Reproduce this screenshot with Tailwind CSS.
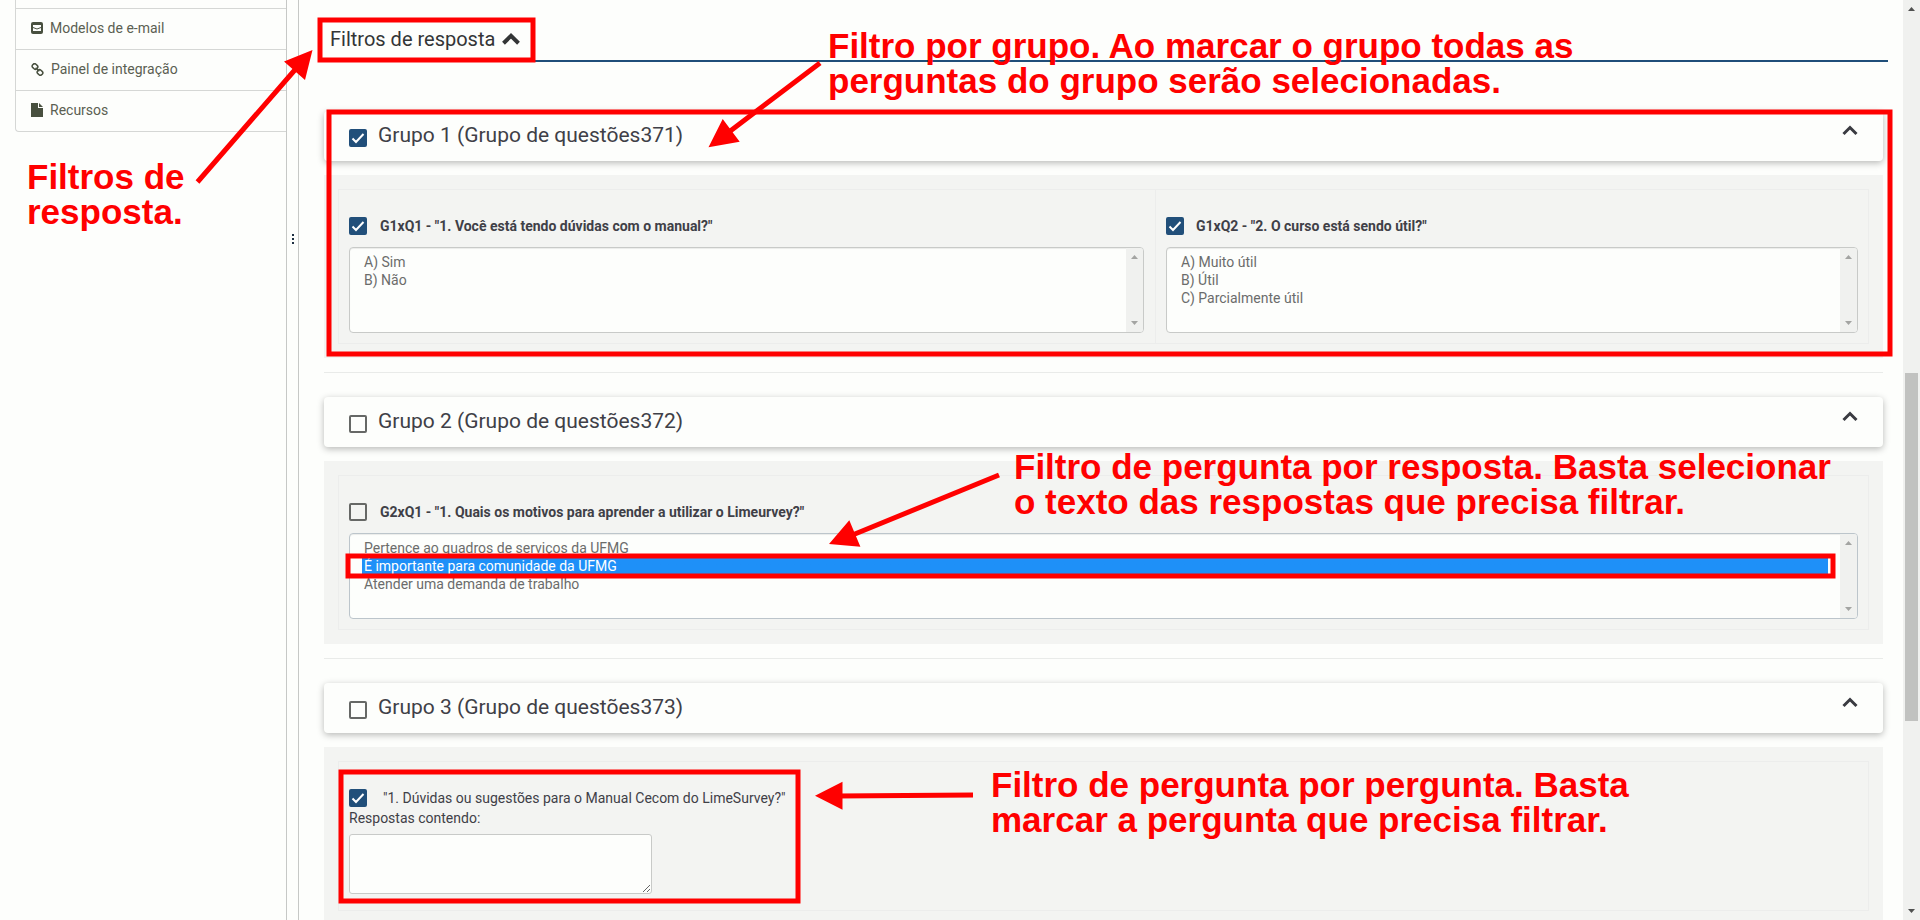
<!DOCTYPE html>
<html lang="pt-BR">
<head>
<meta charset="utf-8">
<title>Filtros de resposta</title>
<script src="https://cdn.jsdelivr.net/npm/@tailwindcss/browser@4"></script>
</head>
<body class="relative flex h-screen overflow-hidden bg-[#fdfefc] font-['Roboto',sans-serif] text-sm text-[#3f4047]">

<!-- Sidebar -->
<aside class="w-[287px] shrink-0 border-r border-[#c6c8c6] pl-[15px]">
  <nav class="rounded-bl border-b border-l border-[#d5d7d5] text-[#5b5f52]">
    <div class="h-2"></div>
    <a href="#" class="flex h-[41px] items-center gap-[7px] border-t border-[#d5d7d5] pb-[2px] pl-[15px]">
      <svg class="size-3" viewBox="0 0 12 12"><rect width="12" height="12" rx="2" fill="#48503f"/><path d="M2 3h8v6H2z" fill="#fdfefc"/><path d="M2 5.500Q6 8.500 10 5.500" fill="none" stroke="#48503f"/></svg>
      Modelos de e-mail</a>
    <a href="#" class="flex h-[41px] items-center gap-[7px] border-t border-[#d5d7d5] pb-[2px] pl-[15px]">
      <svg class="size-[13px]" viewBox="0 0 13 13" fill="none" stroke="#48503f" stroke-width="1.500"><rect x="1.200" y="1.200" width="5.600" height="4.600" rx="2" transform="rotate(42 4 3.500)"/><rect x="6.200" y="7.200" width="5.600" height="4.600" rx="2" transform="rotate(42 9 9.500)"/><path d="M4.600 4.800L8.300 8.200"/></svg>
      Painel de integração</a>
    <a href="#" class="flex h-[41px] items-center gap-[7px] border-t border-[#d5d7d5] pb-[2px] pl-[15px]">
      <svg class="h-[14px] w-3" viewBox="0 0 12 14" fill="#48503f"><path d="M0 0h7v5h5v9H0z"/><path d="M8 0l4 4H8z"/></svg>
      Recursos</a>
  </nav>
</aside>

<!-- Resize handle -->
<div class="flex w-3 shrink-0 flex-col items-center gap-[2px] border-r border-[#c6c8c6] pt-[234px]">
  <i class="size-[2px] bg-[#1d2f42]"></i><i class="size-[2px] bg-[#1d2f42]"></i><i class="size-[2px] bg-[#1d2f42]"></i>
</div>

<main class="min-w-0 flex-1 overflow-hidden pr-[15px] pl-5">
  <h2 class="flex h-[62px] items-center gap-[7px] border-b-2 border-[#1f4e79] pt-[18px] pl-[11px] text-xl text-[#333536]">
    Filtros de resposta
    <svg class="h-3 w-[18px]" viewBox="0 0 18 12" fill="none" stroke="#333536" stroke-width="4"><path d="M1.500 10.200L9 2.900L16.500 10.200"/></svg>
  </h2>

  <div class="px-[5px] pt-[49px]">
    <section>
      <div class="flex h-[50px] items-start justify-between rounded bg-[#fdfefc] px-[25px] shadow-[0_2px_7px_rgba(0,0,0,0.28)]">
        <label class="flex items-start gap-[11px] pt-[10px] text-[21px] leading-[29px]">
          <span class="relative mt-2 block size-[18px]"><input type="checkbox" checked class="peer block size-[18px] appearance-none rounded-[2px] border-2 border-[#666866] checked:border-[#214f7a] checked:bg-[#214f7a]"><svg class="pointer-events-none absolute inset-0 hidden size-[18px] peer-checked:block" viewBox="0 0 18 18" fill="none" stroke="#fff" stroke-width="2"><path d="M3.500 9.500L7 13L14.500 5"/></svg></span>
          Grupo 1 (Grupo de questões371)</label>
        <button aria-label="Recolher grupo 1" class="mt-[14px]"><svg class="h-[11px] w-4" viewBox="0 0 16 11" fill="none" stroke="#3a3b41" stroke-width="3"><path d="M1.500 9L8 2.500L14.500 9"/></svg></button>
      </div>
      <div class="mt-[14px] bg-[#f3f4f2] p-[14px]">
        <div class="flex h-[155px] border border-[#ecedec]">
          <div class="w-[817px] border-r border-[#ecedec] pr-[11px] pl-[10px] pt-[27px]">
            <label class="flex h-[18px] items-center gap-[13px] font-bold">
              <span class="relative block size-[18px]"><input type="checkbox" checked class="peer block size-[18px] appearance-none rounded-[2px] border-2 border-[#666866] checked:border-[#214f7a] checked:bg-[#214f7a]"><svg class="pointer-events-none absolute inset-0 hidden size-[18px] peer-checked:block" viewBox="0 0 18 18" fill="none" stroke="#fff" stroke-width="2"><path d="M3.500 9.500L7 13L14.500 5"/></svg></span>
              G1xQ1 - "1. Você está tendo dúvidas com o manual?"</label>
            <div class="mt-3 flex h-[86px] overflow-hidden rounded border border-[#c8cac8] bg-[#fdfefc] shadow-[inset_0_1px_1px_rgba(0,0,0,0.075)]">
              <select multiple size="4" aria-label="G1xQ1" class="min-w-0 flex-1 appearance-none overflow-hidden bg-transparent px-3 py-[6px] text-sm text-[#6b6c6b] outline-none">
                <option class="h-[18px] min-h-0 px-[2px] py-0 leading-[18px]">A) Sim</option>
                <option class="h-[18px] min-h-0 px-[2px] py-0 leading-[18px]">B) Não</option>
              </select>
              <div class="flex w-[17px] flex-col items-center justify-between bg-[#f0f1ef] py-[7px]"><svg class="h-1 w-[7px]" viewBox="0 0 7 4" fill="#a3a4a2"><path d="M0 4L3.500 0L7 4z"/></svg><svg class="h-1 w-[7px]" viewBox="0 0 7 4" fill="#a3a4a2"><path d="M0 0L3.500 4L7 0z"/></svg></div>
            </div>
          </div>
          <div class="min-w-0 flex-1 px-[10px] pt-[27px]">
            <label class="flex h-[18px] items-center gap-3 font-bold">
              <span class="relative block size-[18px]"><input type="checkbox" checked class="peer block size-[18px] appearance-none rounded-[2px] border-2 border-[#666866] checked:border-[#214f7a] checked:bg-[#214f7a]"><svg class="pointer-events-none absolute inset-0 hidden size-[18px] peer-checked:block" viewBox="0 0 18 18" fill="none" stroke="#fff" stroke-width="2"><path d="M3.500 9.500L7 13L14.500 5"/></svg></span>
              G1xQ2 - "2. O curso está sendo útil?"</label>
            <div class="mt-3 flex h-[86px] overflow-hidden rounded border border-[#c8cac8] bg-[#fdfefc] shadow-[inset_0_1px_1px_rgba(0,0,0,0.075)]">
              <select multiple size="4" aria-label="G1xQ2" class="min-w-0 flex-1 appearance-none overflow-hidden bg-transparent px-3 py-[6px] text-sm text-[#6b6c6b] outline-none">
                <option class="h-[18px] min-h-0 px-[2px] py-0 leading-[18px]">A) Muito útil</option>
                <option class="h-[18px] min-h-0 px-[2px] py-0 leading-[18px]">B) Útil</option>
                <option class="h-[18px] min-h-0 px-[2px] py-0 leading-[18px]">C) Parcialmente útil</option>
              </select>
              <div class="flex w-[17px] flex-col items-center justify-between bg-[#f0f1ef] py-[7px]"><svg class="h-1 w-[7px]" viewBox="0 0 7 4" fill="#a3a4a2"><path d="M0 4L3.500 0L7 4z"/></svg><svg class="h-1 w-[7px]" viewBox="0 0 7 4" fill="#a3a4a2"><path d="M0 0L3.500 4L7 0z"/></svg></div>
            </div>
          </div>
        </div>
      </div>
      <hr class="mt-[14px] mb-6 border-[#e9ebe9]">
    </section>

    <section>
      <div class="flex h-[50px] items-start justify-between rounded bg-[#fdfefc] px-[25px] shadow-[0_2px_7px_rgba(0,0,0,0.28)]">
        <label class="flex items-start gap-[11px] pt-[10px] text-[21px] leading-[29px]">
          <input type="checkbox" class="mt-2 block size-[18px] appearance-none rounded-[2px] border-2 border-[#666866]">
          Grupo 2 (Grupo de questões372)</label>
        <button aria-label="Recolher grupo 2" class="mt-[14px]"><svg class="h-[11px] w-4" viewBox="0 0 16 11" fill="none" stroke="#3a3b41" stroke-width="3"><path d="M1.500 9L8 2.500L14.500 9"/></svg></button>
      </div>
      <div class="mt-[14px] bg-[#f3f4f2] p-[14px]">
        <div class="h-[155px] border border-[#ecedec] px-[10px] pt-[27px]">
          <label class="flex h-[18px] items-center gap-[13px] font-bold">
            <input type="checkbox" class="block size-[18px] appearance-none rounded-[2px] border-2 border-[#666866]">
            G2xQ1 - "1. Quais os motivos para aprender a utilizar o Limeurvey?"</label>
          <div class="mt-3 flex h-[86px] overflow-hidden rounded border border-[#bcc5cb] bg-[#fdfefc] shadow-[inset_0_1px_1px_rgba(0,0,0,0.075)]">
            <select multiple size="4" aria-label="G2xQ1" class="min-w-0 flex-1 appearance-none overflow-hidden bg-transparent px-3 py-[6px] text-sm text-[#6b6c6b] outline-none">
              <option class="h-[18px] min-h-0 px-[2px] py-0 leading-[18px]">Pertence ao quadros de serviços da UFMG</option>
              <option selected class="h-[18px] min-h-0 bg-linear-to-r from-[#1e90f8] to-[#1e90f8] px-[2px] py-0 leading-[18px] text-white checked:text-white">É importante para comunidade da UFMG</option>
              <option class="h-[18px] min-h-0 px-[2px] py-0 leading-[18px]">Atender uma demanda de trabalho</option>
            </select>
            <div class="flex w-[17px] flex-col items-center justify-between bg-[#f0f1ef] py-[7px]"><svg class="h-1 w-[7px]" viewBox="0 0 7 4" fill="#a3a4a2"><path d="M0 4L3.500 0L7 4z"/></svg><svg class="h-1 w-[7px]" viewBox="0 0 7 4" fill="#a3a4a2"><path d="M0 0L3.500 4L7 0z"/></svg></div>
          </div>
        </div>
      </div>
      <hr class="mt-[14px] mb-6 border-[#e9ebe9]">
    </section>

    <section>
      <div class="flex h-[50px] items-start justify-between rounded bg-[#fdfefc] px-[25px] shadow-[0_2px_7px_rgba(0,0,0,0.28)]">
        <label class="flex items-start gap-[11px] pt-[10px] text-[21px] leading-[29px]">
          <input type="checkbox" class="mt-2 block size-[18px] appearance-none rounded-[2px] border-2 border-[#666866]">
          Grupo 3 (Grupo de questões373)</label>
        <button aria-label="Recolher grupo 3" class="mt-[14px]"><svg class="h-[11px] w-4" viewBox="0 0 16 11" fill="none" stroke="#3a3b41" stroke-width="3"><path d="M1.500 9L8 2.500L14.500 9"/></svg></button>
      </div>
      <div class="mt-[14px] bg-[#f3f4f2] p-[14px]">
        <div class="h-[150px] border border-[#ecedec] px-[10px] pt-[27px]">
          <label class="flex h-[18px] items-center gap-4">
            <span class="relative block size-[18px]"><input type="checkbox" checked class="peer block size-[18px] appearance-none rounded-[2px] border-2 border-[#666866] checked:border-[#214f7a] checked:bg-[#214f7a]"><svg class="pointer-events-none absolute inset-0 hidden size-[18px] peer-checked:block" viewBox="0 0 18 18" fill="none" stroke="#fff" stroke-width="2"><path d="M3.500 9.500L7 13L14.500 5"/></svg></span>
            "1. Dúvidas ou sugestões para o Manual Cecom do LimeSurvey?"</label>
          <label for="contendo" class="block leading-[22px]">Respostas contendo:</label>
          <textarea id="contendo" class="mt-[5px] block h-[60px] w-[303px] rounded-[3px] border border-[#c8cac8] bg-[#fdfefc]"></textarea>
        </div>
      </div>
    </section>
  </div>
</main>

<!-- Page scrollbar -->
<div class="flex w-[17px] shrink-0 flex-col items-center bg-[#f0f1ef] py-[7px]">
  <svg class="h-1 w-[7px]" viewBox="0 0 7 4" fill="#505150"><path d="M0 4L3.500 0L7 4z"/></svg>
  <div class="mt-[362px] h-[348px] w-[13px] bg-[#c1c2c0]"></div>
  <svg class="mt-auto h-1 w-[7px]" viewBox="0 0 7 4" fill="#505150"><path d="M0 0L3.500 4L7 0z"/></svg>
</div>

<!-- Annotations drawn over the page -->
<div class="pointer-events-none absolute inset-0 font-['Liberation_Sans',sans-serif] text-[35px] leading-[35px] font-bold text-[#ff0000]">
  <svg class="absolute top-0 left-0 h-[920px] w-[1920px]" viewBox="0 0 1920 920" fill="none" stroke="#f00" stroke-width="5">
    <rect x="320" y="20" width="213" height="40"/>
    <rect x="329" y="112" width="1561" height="242"/>
    <rect x="348" y="556" width="1485" height="20"/>
    <rect x="341" y="772" width="457" height="129"/>
    <path d="M197.500 182L300 64M820 63L725 135M999 475L850 536M973 795L838 796"/>
    <path fill="#f00" stroke="none" d="M312.500 50L284 61.500L305 80zM708.500 147.300L722.700 119L739.700 141.700zM829 544L849.300 520.300L860.400 546.700zM815 795.700L842.500 781.700V809.700z"/>
  </svg>
  <p class="absolute top-[159px] left-[27px] whitespace-nowrap">Filtros de<br>resposta.</p>
  <p class="absolute top-[28px] left-[828px] whitespace-nowrap">Filtro por grupo. Ao marcar o grupo todas as<br>perguntas do grupo serão selecionadas.</p>
  <p class="absolute top-[449px] left-[1014px] whitespace-nowrap">Filtro de pergunta por resposta. Basta selecionar<br>o texto das respostas que precisa filtrar.</p>
  <p class="absolute top-[767px] left-[991px] whitespace-nowrap">Filtro de pergunta por pergunta. Basta<br>marcar a pergunta que precisa filtrar.</p>
</div>
</body>
</html>
